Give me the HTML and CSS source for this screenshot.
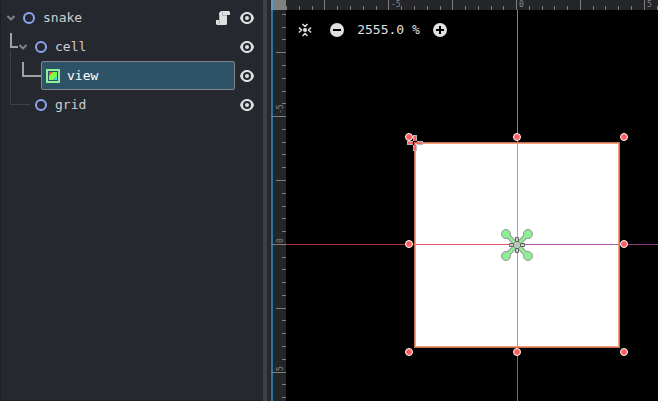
FILE: index.html
```html
<!DOCTYPE html>
<html lang="en">
<head>
<meta charset="utf-8">
<title>Scene editor</title>
<link rel="stylesheet" href="styles.css">
</head>
<body>
<svg class="defs" aria-hidden="true">
  <symbol id="eye" viewBox="0 0 14 14"><path d="M7 1C3.500 1 1 3.500 0 7c1 3.500 3.500 6 7 6s6-2.500 7-6C13 3.500 10.500 1 7 1z" fill="#e0e0e0"/><circle cx="7" cy="7" r="4" fill="#25282e"/><circle cx="7" cy="7" r="2" fill="#e0e0e0"/></symbol>
  <symbol id="node" viewBox="0 0 14 14"><circle cx="7" cy="7" r="5" fill="none" stroke="#8da5f3" stroke-width="2"/></symbol>
  <symbol id="chevron" viewBox="0 0 10 10"><path d="M2 3.500 5 6.500 8 3.500" fill="none" stroke="#808285" stroke-width="2" stroke-linecap="round" stroke-linejoin="round"/></symbol>
</svg>
<main class="editor">
  <section class="scene" aria-label="Scene tree">
    <svg class="guides" width="44" height="120" aria-hidden="true">
      <path d="M10.500 50V104.500H30" fill="none" stroke="#3d4045"/>
      <path d="M11 33V47H18M23 62V76H41" fill="none" stroke="#a0a1a3" stroke-width="2"/>
    </svg>
    <ul class="tree">
      <li class="row">
        <button class="fold" aria-label="Collapse snake"><svg><use href="#chevron"/></svg></button>
        <div class="item"><svg class="icon"><use href="#node"/></svg><span>snake</span></div>
        <button class="action" aria-label="Open script"><svg viewBox="0 0 14 14"><path d="M5 0h8l1 1v3h-3v9l-1 1H1L0 13V9h3V2z" fill="#e0e0e0"/><path d="M6.500 1v3.500H11M3.500 4v8L2 13" fill="none" stroke="#b4b4b4"/></svg></button>
        <button class="action" aria-label="Toggle snake visibility"><svg><use href="#eye"/></svg></button>
      </li>
      <li class="row child">
        <button class="fold" aria-label="Collapse cell"><svg><use href="#chevron"/></svg></button>
        <div class="item"><svg class="icon"><use href="#node"/></svg><span>cell</span></div>
        <button class="action" aria-label="Toggle cell visibility"><svg><use href="#eye"/></svg></button>
      </li>
      <li class="row grandchild">
        <div class="item selected"><svg class="icon" viewBox="0 0 14 14"><path d="M1 1h12v12H1z" fill="#2e5265" stroke="#8eef97" stroke-width="2"/><path d="M3 3h5L3 8z" fill="#ff4545"/><path d="M7 3h4v4l-4 4H3V7z" fill="#80ff45"/><path d="M11 7v4H7z" fill="#45d7ff"/></svg><span>view</span></div>
        <button class="action" aria-label="Toggle view visibility"><svg><use href="#eye"/></svg></button>
      </li>
      <li class="row child">
        <span class="fold"></span>
        <div class="item"><svg class="icon"><use href="#node"/></svg><span>grid</span></div>
        <button class="action" aria-label="Toggle grid visibility"><svg><use href="#eye"/></svg></button>
      </li>
    </ul>
  </section>
  <div class="splitter"></div>
  <section class="viewport" aria-label="2D viewport">
    <div class="corner"></div>
    <svg class="ruler" aria-hidden="true">
      <path d="M38.500 0V10M102.500 0V10M166.500 0V10M230.500 0V10M294.500 0V10M358.500 0V10M.5 6V10M13.500 6V10M26.500 6V10M51.500 6V10M64.500 6V10M77.500 6V10M90.500 6V10M115.500 6V10M128.500 6V10M141.500 6V10M154.500 6V10M179.500 6V10M192.500 6V10M205.500 6V10M217.500 6V10M243.500 6V10M256.500 6V10M268.500 6V10M281.500 6V10M307.500 6V10M319.500 6V10M332.500 6V10M345.500 6V10M371.500 6V10"/>
      <text x="105" y="7">-5</text><text x="233" y="7">0</text><text x="361" y="7">5</text>
    </svg>
    <svg class="ruler" aria-hidden="true">
      <path d="M0 106.500H15M0 234.500H15M0 362.500H15M5 42.500H15M5 170.500H15M5 298.500H15M11 4.500H15M11 17.500H15M11 29.500H15M11 55.500H15M11 68.500H15M11 81.500H15M11 93.500H15M11 119.500H15M11 132.500H15M11 144.500H15M11 157.500H15M11 183.500H15M11 196.500H15M11 208.500H15M11 221.500H15M11 247.500H15M11 259.500H15M11 272.500H15M11 285.500H15M11 310.500H15M11 323.500H15M11 336.500H15M11 349.500H15M11 374.500H15M11 387.500H15"/>
      <text transform="translate(12 104) rotate(-90)">-5</text><text transform="translate(12 233) rotate(-90)">0</text><text transform="translate(12 361) rotate(-90)">5</text>
    </svg>
    <div class="canvas">
      <svg class="drawing" role="img" aria-label="Selected square sprite with transform handles">
        <path d="M129 133H333V337H129z" fill="#fff"/>
        <path d="M0 234.500H231" stroke="#b52d40"/><path d="M129 234.500H231" stroke="#ee526b"/>
        <path d="M231 234.500H2000" stroke="#913c8b"/><path d="M231 234.500H333" stroke="#b45bb0"/>
        <path d="M231.500 0V133" stroke="#6b9e13"/><path d="M231.500 133V235" stroke="#8bc81c"/>
        <path d="M231.500 235V2000" stroke="#55865a"/><path d="M231.500 235V337" stroke="#83b18a"/>
        <path d="M129 133H333V337H129z" fill="none" stroke="#f18a5d" stroke-width="2" stroke-opacity=".8"/>
        <g fill="#999" stroke="#999">
          <path d="M220 224 242 246M242 224 220 246" stroke-width="5"/>
          <circle cx="220" cy="224" r="4.500"/><circle cx="242" cy="224" r="4.500"/><circle cx="220" cy="246" r="4.500"/><circle cx="242" cy="246" r="4.500"/>
        </g>
        <g fill="#8eef97" stroke="#8eef97">
          <path d="M220 224 242 246M242 224 220 246" stroke-width="3"/>
          <circle cx="220" cy="224" r="3.500"/><circle cx="242" cy="224" r="3.500"/><circle cx="220" cy="246" r="3.500"/><circle cx="242" cy="246" r="3.500"/>
        </g>
        <path d="M231 230 236 235 231 240 226 235z" fill="#b5c9b5" stroke="#888"/>
        <path d="M229.500 227.500h3v4h-3zM229.500 238.500h3v4h-3zM227.500 233.500h-4v3h4zM234.500 233.500h4v3h-4z" fill="#ccc" stroke="#666"/>
        <path d="M129 125V131M129 135V141M121 133H127M131 133H137" stroke="#bdb3b3" stroke-width="4"/>
        <path d="M129 126V131M129 135V140M122 133H127M131 133H136" stroke="#ff5f66" stroke-width="2"/>
        <g fill="#ff5d60" stroke="#fff">
          <circle cx="123" cy="127" r="3.500"/><circle cx="231" cy="127" r="3.500"/><circle cx="338" cy="127" r="3.500"/>
          <circle cx="123" cy="234" r="3.500"/><circle cx="338" cy="234" r="3.500"/>
          <circle cx="123" cy="342" r="3.500"/><circle cx="231" cy="342" r="3.500"/><circle cx="338" cy="342" r="3.500"/>
        </g>
      </svg>
      <div class="zoombar">
        <button aria-label="Center view"><svg viewBox="0 0 14 14"><circle cx="7" cy="7" r="2" fill="#e0e0e0"/><path d="M4.500 1 7 3.500 9.500 1M4.500 13 7 10.500 9.500 13M1 4.500 3.500 7 1 9.500M13 4.500 10.500 7 13 9.500" fill="none" stroke="#e0e0e0" stroke-width="1.500"/></svg></button>
        <div class="zoom">
          <button aria-label="Zoom out"><svg viewBox="0 0 14 14"><circle cx="7" cy="7" r="7" fill="#e0e0e0"/><path d="M3 7h8" stroke="#000" stroke-width="2"/></svg></button>
          <button>2555.0 %</button>
          <button aria-label="Zoom in"><svg viewBox="0 0 14 14"><circle cx="7" cy="7" r="7" fill="#e0e0e0"/><path d="M3 7h8M7 3v8" stroke="#000" stroke-width="2"/></svg></button>
        </div>
      </div>
    </div>
  </section>
</main>
</body>
</html>
```

FILE: styles.css
```css
* { box-sizing: border-box; }
body {
  margin: 0;
  background: #25282e;
  color: #cdcfd2;
  font: 13px/20px "DejaVu Sans Mono", monospace;
}
svg { display: block; }
.defs { position: absolute; width: 0; height: 0; }
button {
  padding: 0;
  border: 0;
  background: none;
  color: inherit;
  font: inherit;
}
.editor {
  display: grid;
  grid-template-columns: 40% 4px 1fr;
  height: 100vh;
  overflow: hidden;
}
.scene {
  position: relative;
  border-left: 1px solid #1d2025;
  border-bottom: 1px solid #1d2025;
}
.guides { position: absolute; top: 0; left: -1px; }
.tree {
  margin: 0;
  padding: 3px 9px 0 5px;
  list-style: none;
}
.row { display: flex; align-items: center; height: 29px; }
.child { padding-left: 12px; }
.grandchild { padding-left: 35px; }
.fold { width: 10px; }
.fold svg { width: 10px; height: 10px; }
.item {
  display: flex;
  flex: 1;
  align-items: center;
  gap: 7px;
  height: 29px;
  padding-left: 6px;
}
.selected {
  padding-left: 4px;
  border: 1px solid #818488;
  border-radius: 2px;
  background: #2f5366;
  color: #fff;
}
.icon { width: 14px; height: 14px; }
.action { width: 14px; margin-left: 10px; }
.selected + .action { margin-left: 5px; }
.action svg { width: 14px; height: 14px; }
.splitter { background: #3b4146; }
.viewport {
  display: grid;
  grid-template: 10px 1fr / 15px 1fr;
  margin-left: 4px;
  min-width: 0;
  background: linear-gradient(90deg, #2c759e 2px, #232529 2px);
}
.corner { background: linear-gradient(90deg, #579bc1 2px, #808080 2px); }
.ruler { width: 100%; height: 100%; overflow: hidden; }
.ruler path { stroke: #7d7e80; }
.ruler text { fill: #858688; font-size: 8px; }
.canvas { position: relative; overflow: hidden; background: #000; }
.drawing { position: absolute; inset: 0; width: 100%; height: 100%; }
.zoombar {
  position: relative;
  display: flex;
  align-items: center;
  gap: 18px;
  padding: 10px 12px;
  color: #e0e0e0;
}
.zoom { display: flex; align-items: center; gap: 13px; }
.zoombar svg { width: 14px; height: 14px; }
```
